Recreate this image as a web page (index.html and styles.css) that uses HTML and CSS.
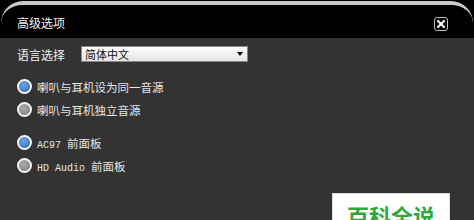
FILE: index.html
```html
<!DOCTYPE html>
<html>
<head>
<meta charset="utf-8">
<link rel="stylesheet" href="styles.css">
</head>
<body>
<div class="win">
  <div class="head">
    <div class="rim">
      <span class="title">高级选项</span>
      <span class="close">
        <svg width="8" height="8" viewBox="0 0 8 8"><path d="M1 1L7 7M7 1L1 7" stroke="#fff" stroke-width="2" stroke-linecap="square"/></svg>
      </span>
    </div>
  </div>
  <div class="body">
    <div class="lang">
      <span class="label">语言选择</span>
      <div class="select"><span>简体中文</span><span class="arrow"></span></div>
    </div>
    <div class="group">
      <div class="opt"><span class="radio on"></span><span>喇叭与耳机设为同一音源</span></div>
      <div class="opt"><span class="radio"></span><span>喇叭与耳机独立音源</span></div>
    </div>
    <div class="group">
      <div class="opt"><span class="radio on"></span><span><span class="mono">AC97 </span>前面板</span></div>
      <div class="opt"><span class="radio"></span><span><span class="mono">HD Audio </span>前面板</span></div>
    </div>
    <div class="foot">
      <div class="brand">百科全说</div>
    </div>
  </div>
</div>
</body>
</html>
```
FILE: styles.css
```css
html, body {
  margin: 0;
  padding: 0;
  background: #000;
}
body {
  width: 474px;
  height: 220px;
  overflow: hidden;
  font-family: "Noto Sans CJK SC", "Noto Sans", sans-serif;
}
.win {
  display: flex;
  flex-direction: column;
  height: 220px;
}
.head {
  background: #000;
  height: 38px;
  padding: 1px 1px 0;
  box-sizing: border-box;
}
.rim {
  height: 37px;
  box-sizing: border-box;
  border-top: 4px solid #c8c8c8;
  border-radius: 22px 22px 0 0;
  display: flex;
  align-items: center;
  justify-content: space-between;
  padding: 0 25px 0 16px;
}
.title {
  color: #f2f2f2;
  font-size: 12px;
  margin-top: 2px;
}
.close {
  width: 12px;
  height: 12px;
  border: 1px solid #bdbdbd;
  border-radius: 3px;
  display: flex;
  align-items: center;
  justify-content: center;
  margin-top: 4px;
}
.body {
  flex: 1;
  background: #333333;
  padding: 8px 0 0 17px;
  color: #e6e6e6;
  font-size: 11.5px;
  display: flex;
  flex-direction: column;
}
.lang {
  display: flex;
  align-items: center;
  height: 16px;
}
.label {
  width: 64px;
  font-size: 12px;
  color: #f2f2f2;
}
.select {
  width: 158px;
  height: 14px;
  border: 1px solid #888;
  background: linear-gradient(#ffffff, #e4e4e4);
  color: #111;
  font-size: 11px;
  display: flex;
  align-items: center;
  justify-content: space-between;
  padding: 0 4px 0 3px;
  line-height: 14px;
}
.arrow {
  width: 0;
  height: 0;
  border-left: 3px solid transparent;
  border-right: 3px solid transparent;
  border-top: 4px solid #000;
}
.group {
  display: flex;
  flex-direction: column;
  gap: 8px;
  margin-top: 17px;
}
.group + .group {
  margin-top: 18px;
}
.opt {
  display: flex;
  align-items: center;
  gap: 5px;
  height: 15px;
}
.radio {
  width: 11px;
  height: 11px;
  border-radius: 50%;
  border: 2px solid #f4f4f4;
  background: radial-gradient(circle at 40% 35%, #a8a8a8, #7e7e7e);
  flex: none;
}
.radio.on {
  background: radial-gradient(circle at 40% 35%, #6aa6e4, #2f6bb4);
}
.mono {
  font-family: "Liberation Mono", monospace;
  font-size: 10px;
}
.foot {
  display: flex;
  justify-content: flex-end;
  padding-right: 24px;
  margin-top: 20px;
}
.brand {
  width: 118px;
  height: 40px;
  background: #fff;
  border: 1px solid #ddd;
  color: #2fa83a;
  font-size: 22px;
  font-weight: bold;
  text-align: center;
  padding-top: 6px;
  line-height: 30px;
  box-sizing: border-box;
}
```
